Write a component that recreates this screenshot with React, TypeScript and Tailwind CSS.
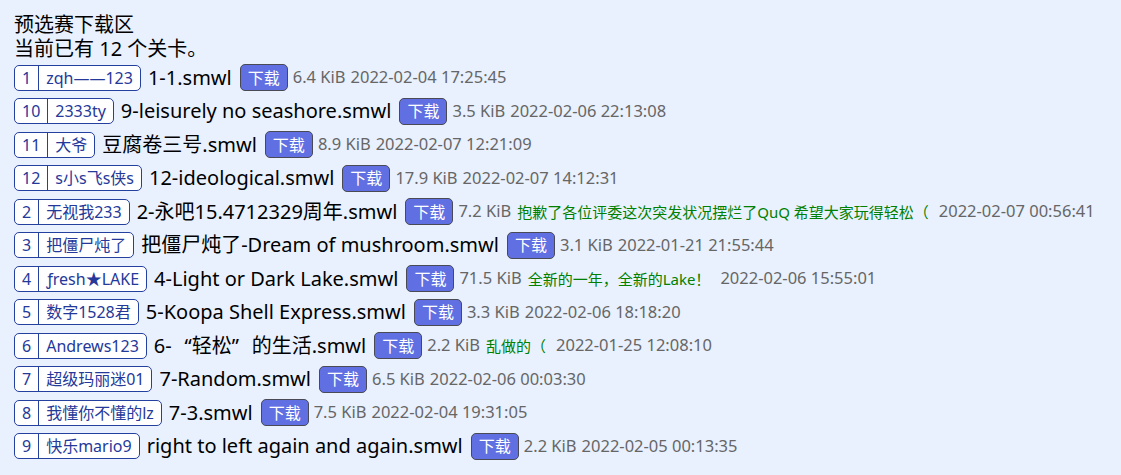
import React from 'react';

type Level = {
  id: string;
  author: string;
  file: React.ReactNode;
  size: string;
  note?: string;
  date: string;
};

// fullwidth-looking curly quotes, like the CJK font in the original
const Lq = () => <span className="inline-block w-[1em] text-right">“</span>;
const Rq = () => <span className="inline-block w-[1em] text-left">”</span>;

const LEVELS: Level[] = [
  { id: '1', author: 'zqh——123', file: '1-1.smwl', size: '6.4 KiB', date: '2022-02-04 17:25:45' },
  { id: '10', author: '2333ty', file: '9-leisurely no seashore.smwl', size: '3.5 KiB', date: '2022-02-06 22:13:08' },
  { id: '11', author: '大爷', file: '豆腐卷三号.smwl', size: '8.9 KiB', date: '2022-02-07 12:21:09' },
  { id: '12', author: 's小s飞s侠s', file: '12-ideological.smwl', size: '17.9 KiB', date: '2022-02-07 14:12:31' },
  {
    id: '2',
    author: '无视我233',
    file: '2-永吧15.4712329周年.smwl',
    size: '7.2 KiB',
    note: '抱歉了各位评委这次突发状况摆烂了QuQ 希望大家玩得轻松（',
    date: '2022-02-07 00:56:41',
  },
  { id: '3', author: '把僵尸炖了', file: '把僵尸炖了-Dream of mushroom.smwl', size: '3.1 KiB', date: '2022-01-21 21:55:44' },
  {
    id: '4',
    author: 'ƒresh★LAKE',
    file: '4-Light or Dark Lake.smwl',
    size: '71.5 KiB',
    note: '全新的一年，全新的Lake！',
    date: '2022-02-06 15:55:01',
  },
  { id: '5', author: '数字1528君', file: '5-Koopa Shell Express.smwl', size: '3.3 KiB', date: '2022-02-06 18:18:20' },
  {
    id: '6',
    author: 'Andrews123',
    file: (
      <>
        6-<Lq />轻松<Rq />的生活.smwl
      </>
    ),
    size: '2.2 KiB',
    note: '乱做的（',
    date: '2022-01-25 12:08:10',
  },
  { id: '7', author: '超级玛丽迷01', file: '7-Random.smwl', size: '6.5 KiB', date: '2022-02-06 00:03:30' },
  { id: '8', author: '我懂你不懂的lz', file: '7-3.smwl', size: '7.5 KiB', date: '2022-02-04 19:31:05' },
  { id: '9', author: '快乐mario9', file: 'right to left again and again.smwl', size: '2.2 KiB', date: '2022-02-05 00:13:35' },
];

function LevelRow({ level }: { level: Level }) {
  return (
    <div className="flex items-center h-[33.5px] whitespace-nowrap">
      <div className="flex items-stretch h-[26px] border border-[#2541a0] rounded-[5px] bg-white text-[#24399a] text-[16px] leading-none">
        <span className="flex items-center px-[7px] border-r border-[#2541a0]">{level.id}</span>
        <span className="flex items-center px-[7px]">{level.author}</span>
      </div>
      <span className="ml-[7px] text-[20px] text-black">{level.file}</span>
      <button className="ml-[8px] h-[27px] px-[7px] rounded-[5px] border border-[#4a4a55] bg-[#6070e2] text-white text-[16px] leading-none">
        下载
      </button>
      <span className="ml-[5px] text-[16.5px] text-[#666]">{level.size}</span>
      {level.note && <span className="ml-[6px] text-[15px] text-[#008000]">{level.note}</span>}
      <span className={`${level.note ? 'ml-[10px]' : 'ml-[5px]'} text-[16.5px] text-[#666]`}>{level.date}</span>
    </div>
  );
}

export default function App() {
  return (
    <div
      className="min-h-screen bg-[#e9f1fe] px-[14px] pt-[13px]"
      style={{ fontFamily: '"Noto Sans", "Noto Sans CJK SC", sans-serif' }}
    >
      <div className="text-[20px] leading-[24px] text-black">预选赛下载区</div>
      <div className="text-[20px] leading-[24px] text-black">当前已有 12 个关卡。</div>
      <div className="flex flex-col">
        {LEVELS.map((level) => (
          <LevelRow key={level.id} level={level} />
        ))}
      </div>
    </div>
  );
}
